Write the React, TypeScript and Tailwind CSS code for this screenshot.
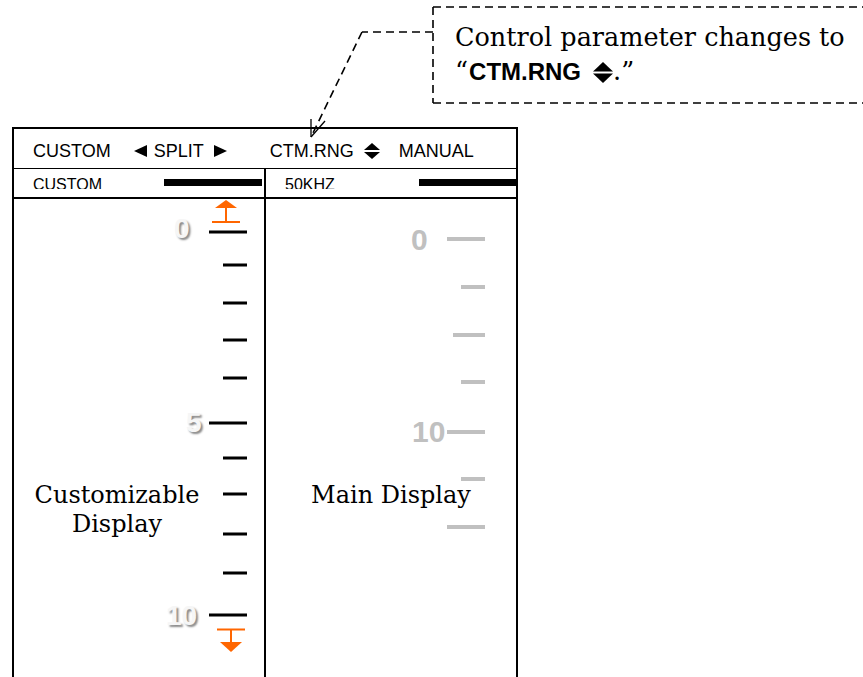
import React from "react";

const UpDown = ({ w, h, gap }: { w: number; h: number; gap: number }) => {
  const th = (h - gap) / 2;
  return (
    <svg width={w} height={h} viewBox={`0 0 ${w} ${h}`} className="block">
      <polygon points={`0,${th} ${w / 2},0 ${w},${th}`} fill="#000" />
      <polygon points={`0,${th + gap} ${w},${th + gap} ${w / 2},${h}`} fill="#000" />
    </svg>
  );
};

const leftTicks: { y: number; long: boolean }[] = [
  { y: 33, long: true },
  { y: 66, long: false },
  { y: 104, long: false },
  { y: 141, long: false },
  { y: 179, long: false },
  { y: 224, long: true },
  { y: 259, long: false },
  { y: 295, long: false },
  { y: 335, long: false },
  { y: 374, long: false },
  { y: 416, long: true },
];

const rightTicks: { y: number; x: number }[] = [
  { y: 40, x: 181 },
  { y: 88, x: 195 },
  { y: 136, x: 187 },
  { y: 183, x: 195 },
  { y: 233, x: 181 },
  { y: 280, x: 195 },
  { y: 328, x: 181 },
];

export default function App() {
  return (
    <div className="relative w-[863px] h-[677px] bg-white overflow-hidden text-black font-['Liberation_Sans',Arial,sans-serif]">
      {/* callout */}
      <div className="h-[127px] pt-[20px] pl-[455px] font-['DejaVu_Serif',serif] text-[25.5px] leading-[34px]">
        <div>Control parameter changes to</div>
        <div className="flex items-baseline">
          <span>“</span>
          <span className="ml-[1px] font-['Liberation_Sans',Arial,sans-serif] font-bold text-[24px]">CTM.RNG</span>
          <span className="ml-[12px] self-center mt-[2px]">
            <UpDown w={20} h={21} gap={2} />
          </span>
          <span>.”</span>
        </div>
      </div>

      {/* frame */}
      <div className="ml-[12px] w-[506px] h-[550px] border-2 border-b-0 border-black flex flex-col">
        {/* header row */}
        <div className="h-[40px] border-b border-black flex items-start pt-[13px] pl-[19px] text-[18px] leading-[18px]">
          <span>CUSTOM</span>
          <svg width="13" height="12" viewBox="0 0 13 12" className="ml-[23px] mt-[3px]">
            <polygon points="0,6 13,0 13,12" fill="#000" />
          </svg>
          <span className="ml-[7px]">SPLIT</span>
          <svg width="13" height="12" viewBox="0 0 13 12" className="ml-[10px] mt-[3px]">
            <polygon points="0,0 13,6 0,12" fill="#000" />
          </svg>
          <span className="ml-[43px]">CTM.RNG</span>
          <span className="ml-[10px] mt-[1px]">
            <UpDown w={16} h={16} gap={2} />
          </span>
          <span className="ml-[19px]">MANUAL</span>
        </div>

        {/* second row */}
        <div className="h-[30px] border-b-2 border-black flex text-[16px] leading-[16px]">
          <div className="w-[252px] border-r-2 border-black flex items-start">
            <div className="h-[20px] overflow-hidden pt-[8px] pl-[19px]">CUSTOM</div>
            <div className="ml-auto mt-[10px] mr-[2px] w-[98px] h-[7px] bg-black" />
          </div>
          <div className="flex-1 flex items-start">
            <div className="h-[20px] overflow-hidden pt-[8px] pl-[19px]">50KHZ</div>
            <div className="ml-auto mt-[10px] w-[97px] h-[7px] bg-black" />
          </div>
        </div>

        {/* panels */}
        <div className="flex-1 flex">
          {/* customizable display */}
          <div className="relative w-[252px] border-r-2 border-black">
            <svg width="250" height="478" viewBox="0 0 250 478" className="absolute left-0 top-0">
              {leftTicks.map((t, i) => (
                <rect
                  key={i}
                  x={t.long ? 195 : 209}
                  y={t.y - 1.5}
                  width={t.long ? 38 : 24}
                  height={3}
                  fill="#000"
                />
              ))}
              <polygon points="212,1 201,9 223,9" fill="#ff6600" />
              <rect x="211" y="9" width="2" height="14" fill="#ff6600" />
              <rect x="198" y="22" width="28" height="2" fill="#ff6600" />
              <rect x="203" y="429.5" width="28" height="2" fill="#ff6600" />
              <rect x="216" y="431" width="2" height="12" fill="#ff6600" />
              <polygon points="206,443 228,443 217,453" fill="#ff6600" />
            </svg>
            <span className="absolute left-[160px] top-[16px] text-[28px] leading-[28px] font-bold text-[#f6f6f6] [text-shadow:2px_2px_2px_#8a8a8a]">
              0
            </span>
            <span className="absolute left-[172px] top-[210px] text-[28px] leading-[28px] font-bold text-[#f6f6f6] [text-shadow:2px_2px_2px_#8a8a8a]">
              5
            </span>
            <span className="absolute left-[152px] top-[403px] text-[28px] leading-[28px] font-bold text-[#f6f6f6] [text-shadow:2px_2px_2px_#8a8a8a]">
              10
            </span>
            <div className="absolute left-[18px] top-[282px] w-[170px] text-center font-['DejaVu_Serif',serif] text-[24px] leading-[29px]">
              Customizable
              <br />
              Display
            </div>
          </div>

          {/* main display */}
          <div className="relative flex-1">
            <svg width="250" height="478" viewBox="0 0 250 478" className="absolute left-0 top-0">
              {rightTicks.map((t, i) => (
                <rect key={i} x={t.x} y={t.y - 2} width={219 - t.x} height={4} fill="#c0c0c0" />
              ))}
            </svg>
            <span className="absolute left-[145px] top-[26px] text-[30px] leading-[30px] font-bold text-[#c0c0c0]">
              0
            </span>
            <span className="absolute left-[146px] top-[218px] text-[30px] leading-[30px] font-bold text-[#c0c0c0]">
              10
            </span>
            <div className="absolute left-[40px] top-[282px] w-[170px] text-center font-['DejaVu_Serif',serif] text-[24px] leading-[29px]">
              Main Display
            </div>
          </div>
        </div>
      </div>

      {/* annotation arrow overlay */}
      <svg
        width="863"
        height="677"
        viewBox="0 0 863 677"
        className="absolute left-0 top-0 pointer-events-none"
      >
        <g stroke="#000" strokeWidth="1.6" fill="none" strokeDasharray="8 5">
          <line x1="433" y1="7" x2="863" y2="7" />
          <line x1="433" y1="7" x2="433" y2="103" />
          <line x1="433" y1="103" x2="863" y2="103" />
          <line x1="433" y1="32" x2="362" y2="32" />
          <line x1="362" y1="32" x2="311" y2="137" />
        </g>
        <g stroke="#000" strokeWidth="1.3" fill="none">
          <line x1="311" y1="137" x2="311" y2="119" />
          <line x1="311" y1="137" x2="325" y2="121" />
        </g>
      </svg>
    </div>
  );
}
